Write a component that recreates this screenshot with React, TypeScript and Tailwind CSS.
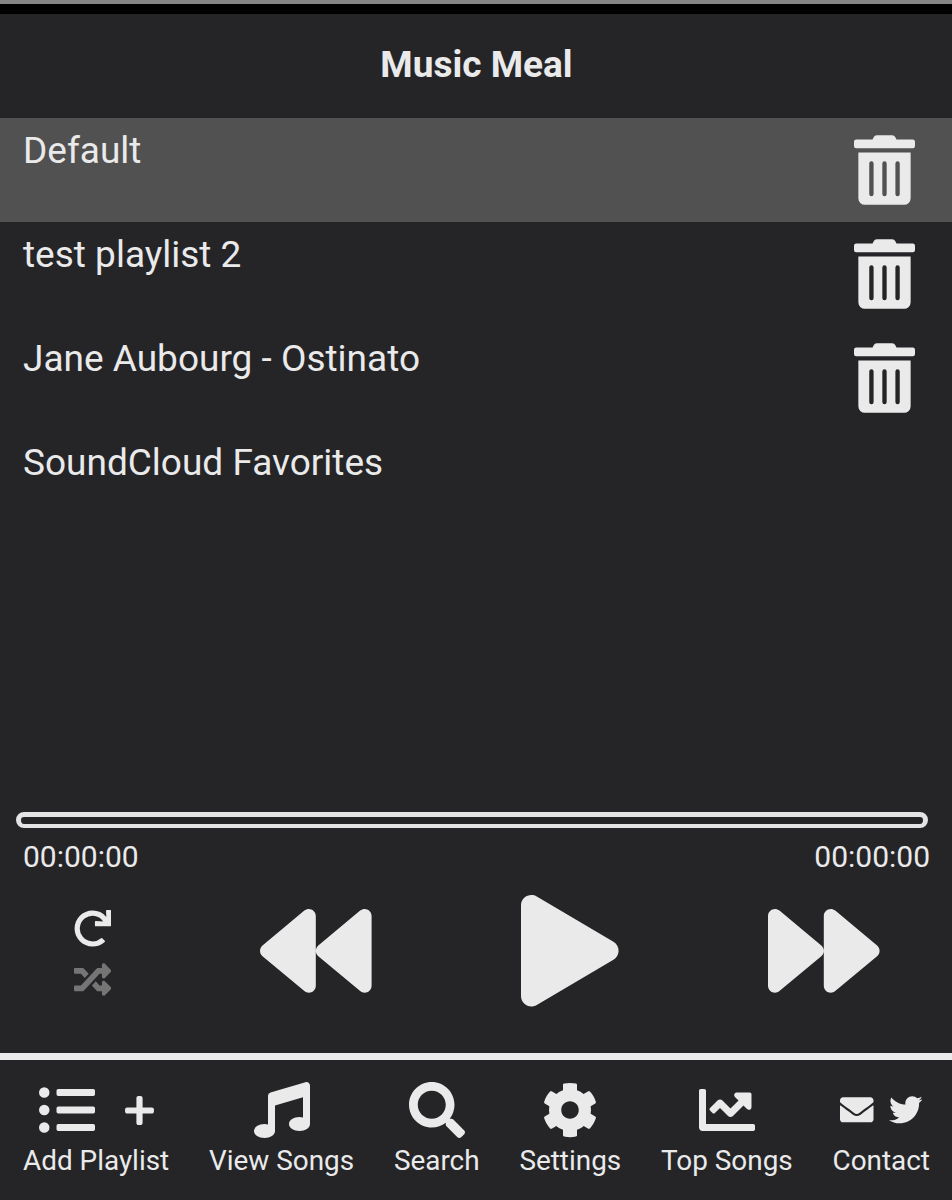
import type { ReactNode } from "react";
import {
  FaBackward,
  FaChartLine,
  FaCog,
  FaEnvelope,
  FaForward,
  FaListUl,
  FaMusic,
  FaPlay,
  FaPlus,
  FaRandom,
  FaRedo,
  FaSearch,
  FaTrashAlt,
  FaTwitter,
} from "react-icons/fa";

const playlists = [
  { name: "Default", removable: true, selected: true },
  { name: "test playlist 2", removable: true, selected: false },
  { name: "Jane Aubourg - Ostinato", removable: true, selected: false },
  { name: "SoundCloud Favorites", removable: false, selected: false },
];

function NavItem({ label, children }: { label: string; children: ReactNode }) {
  return (
    <button className="flex flex-col items-center">
      <span className="flex h-14 items-center justify-center">{children}</span>
      <span className="mt-[5px] whitespace-nowrap text-[27.9px] leading-[35px]">{label}</span>
    </button>
  );
}

export default function App() {
  return (
    <div className="flex h-[1200px] w-[952px] flex-col overflow-hidden bg-[#252527] font-['Roboto',sans-serif] text-[37px] text-[#eaeaeb]">
      <div className="h-[14px] shrink-0 border-t-4 border-[#858585] bg-black" />
      <header className="flex h-[104px] shrink-0 items-center justify-center pb-0.5">
        <h1 className="pl-px font-bold leading-[44px]">Music Meal</h1>
      </header>

      <ul className="flex flex-1 flex-col">
        {playlists.map((p) => (
          <li
            key={p.name}
            className={`flex h-[104px] items-start justify-between pl-[23px] pr-[37px] ${p.selected ? "bg-[#515151]" : ""}`}
          >
            <span className="mt-[11px] leading-[44px]">{p.name}</span>
            {p.removable && (
              <button aria-label="Delete" className="mt-[17px]">
                <FaTrashAlt className="h-[70px] w-[61px]" />
              </button>
            )}
          </li>
        ))}
      </ul>

      <section className="flex h-[241px] shrink-0 flex-col">
        <div className="ml-4 h-4 w-[912px] shrink-0 rounded-lg border-4 border-t-5 border-x-5 border-[#e4e4e5]" />
        <div className="mt-[11px] flex justify-between pl-[23px] pr-[22px] text-[30px] leading-[35px]">
          <span>00:00:00</span>
          <span>00:00:00</span>
        </div>
        <div className="mt-[21px] flex h-[112px] items-center">
          <div className="ml-[74px] mt-[6px] flex w-[37px] flex-col gap-[14px]">
            <FaRedo className="size-[37.2px]" />
            <FaRandom className="size-[37.2px] text-[#757576]" />
          </div>
          <FaBackward className="ml-[149.4px] size-[111.6px]" />
          <FaPlay className="ml-[149.4px] h-[111.6px] w-[97.6px]" />
          <FaForward className="ml-[149px] size-[111.6px]" />
        </div>
      </section>

      <nav className="flex h-[147px] shrink-0 items-start justify-between border-t-[7px] border-[#eaeaeb] pl-[23px] pr-[22px] pt-[22px]">
        <NavItem label="Add Playlist">
          <FaListUl className="size-14" />
          <FaPlus className="ml-[30px] h-[33px] w-[29px]" />
        </NavItem>
        <NavItem label="View Songs">
          <FaMusic className="size-14" />
        </NavItem>
        <NavItem label="Search">
          <FaSearch className="size-14" />
        </NavItem>
        <NavItem label="Settings">
          <FaCog className="size-14" />
        </NavItem>
        <NavItem label="Top Songs">
          <FaChartLine className="size-14" />
        </NavItem>
        <NavItem label="Contact">
          <FaEnvelope className="size-[33.5px]" />
          <FaTwitter className="ml-[15px] size-[33.5px]" />
        </NavItem>
      </nav>
    </div>
  );
}
